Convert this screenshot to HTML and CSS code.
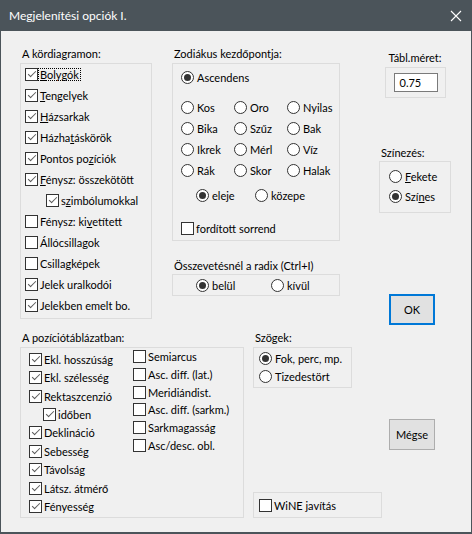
FILE: index.html
```html
<!DOCTYPE html>
<html lang="hu">
<head>
<meta charset="utf-8">
<title>Megjelenítési opciók I.</title>
<link rel="stylesheet" href="styles.css">
</head>
<body>
<div class="window">
  <div class="titlebar">
    <span class="title">Megjelenítési opciók I.</span>
    <svg class="close" width="12" height="12" viewBox="0 0 12 12"><path d="M1 1L11 11M11 1L1 11" stroke="#fff" stroke-width="1.1" fill="none"/></svg>
  </div>
  <div class="client">
    <div class="row-top">
      <div class="col c1">
        <div class="glabel">A kördiagramon:</div>
        <div class="group g-kor">
          <div class="item"><span class="cb on"></span><span class="focus"><u>B</u>olygók</span></div>
          <div class="item"><span class="cb on"></span><span><u>T</u>engelyek</span></div>
          <div class="item"><span class="cb on"></span><span><u>H</u>ázsarkak</span></div>
          <div class="item"><span class="cb on"></span><span>Házha<u>t</u>áskörök</span></div>
          <div class="item"><span class="cb on"></span><span>Pontos po<u>z</u>íciók</span></div>
          <div class="item"><span class="cb on"></span><span><u>F</u>énysz: összekötött</span></div>
          <div class="item sub"><span class="cb on"></span><span>s<u>z</u>imbólumokkal</span></div>
          <div class="item"><span class="cb"></span><span>Fénysz: ki<u>v</u>etített</span></div>
          <div class="item"><span class="cb"></span><span>Állócsillagok</span></div>
          <div class="item"><span class="cb"></span><span>Csillagképek</span></div>
          <div class="item"><span class="cb on"></span><span>Jelek uralkodói</span></div>
          <div class="item"><span class="cb on"></span><span>Jelekben emelt bo.</span></div>
        </div>
      </div>
      <div class="col c2">
        <div class="glabel">Zodiákus kezdőpontja:</div>
        <div class="group g-zod">
          <div class="item"><span class="rb on"></span><span>Ascendens</span></div>
          <div class="zgrid">
            <div class="item"><span class="rb"></span><span>Kos</span></div>
            <div class="item"><span class="rb"></span><span>Oro</span></div>
            <div class="item"><span class="rb"></span><span>Nyilas</span></div>
            <div class="item"><span class="rb"></span><span>Bika</span></div>
            <div class="item"><span class="rb"></span><span>Szűz</span></div>
            <div class="item"><span class="rb"></span><span>Bak</span></div>
            <div class="item"><span class="rb"></span><span>Ikrek</span></div>
            <div class="item"><span class="rb"></span><span>Mérl</span></div>
            <div class="item"><span class="rb"></span><span>Víz</span></div>
            <div class="item"><span class="rb"></span><span>Rák</span></div>
            <div class="item"><span class="rb"></span><span>Skor</span></div>
            <div class="item"><span class="rb"></span><span>Halak</span></div>
          </div>
          <div class="erow">
            <div class="item e1"><span class="rb on"></span><span>eleje</span></div>
            <div class="item"><span class="rb"></span><span>közepe</span></div>
          </div>
          <div class="item forditott"><span class="cb"></span><span>fordított sorrend</span></div>
        </div>
        <div class="glabel l-radix">Összevetésnél a radix (Ctrl+I)</div>
        <div class="group g-radix">
          <div class="item b1"><span class="rb on"></span><span>belül</span></div>
          <div class="item"><span class="rb"></span><span>kívül</span></div>
        </div>
      </div>
      <div class="col c3">
        <div class="glabel l-tabl">Tábl.méret:</div>
        <div class="group g-tabl"><div class="edit">0.75</div></div>
        <div class="glabel l-szin">Színezés:</div>
        <div class="group g-szin">
          <div class="item"><span class="rb"></span><span><u>F</u>ekete</span></div>
          <div class="item"><span class="rb on"></span><span>Szí<u>n</u>es</span></div>
        </div>
        <div class="btn ok">OK</div>
      </div>
    </div>
    <div class="row-bottom">
      <div class="col b1c">
        <div class="glabel">A pozíciótáblázatban:</div>
        <div class="group g-poz">
          <div class="pcol pl">
            <div class="item"><span class="cb on"></span><span>Ekl. hosszúság</span></div>
            <div class="item"><span class="cb on"></span><span>Ekl. szélesség</span></div>
            <div class="item"><span class="cb on"></span><span>Rektaszcenzió</span></div>
            <div class="item sub2"><span class="cb on"></span><span>időben</span></div>
            <div class="item"><span class="cb on"></span><span>Deklináció</span></div>
            <div class="item"><span class="cb on"></span><span>Sebesség</span></div>
            <div class="item"><span class="cb on"></span><span>Távolság</span></div>
            <div class="item"><span class="cb on"></span><span>Látsz. átmérő</span></div>
            <div class="item"><span class="cb on"></span><span>Fényesség</span></div>
          </div>
          <div class="pcol pr">
            <div class="item"><span class="cb"></span><span>Semiarcus</span></div>
            <div class="item"><span class="cb"></span><span>Asc. diff. (lat.)</span></div>
            <div class="item"><span class="cb"></span><span>Meridiándist.</span></div>
            <div class="item"><span class="cb"></span><span>Asc. diff. (sarkm.)</span></div>
            <div class="item"><span class="cb"></span><span>Sarkmagasság</span></div>
            <div class="item"><span class="cb"></span><span>Asc/desc. obl.</span></div>
          </div>
        </div>
      </div>
      <div class="col b2c">
        <div class="glabel">Szögek:</div>
        <div class="group g-szog">
          <div class="item"><span class="rb on"></span><span>Fok, perc, mp.</span></div>
          <div class="item"><span class="rb"></span><span>Tizedestört</span></div>
        </div>
        <div class="group g-wine">
          <div class="item"><span class="cb"></span><span>WiNE javítás</span></div>
        </div>
      </div>
      <div class="col b3c">
        <div class="btn megse">Mégse</div>
      </div>
    </div>
  </div>
</div>
</body>
</html>
```
FILE: styles.css
```css
* { box-sizing: border-box; }
html, body { margin: 0; padding: 0; }
body {
  width: 472px;
  height: 534px;
  overflow: hidden;
  background: #4b545a;
  font-family: Lato, "Liberation Sans", sans-serif;
  font-size: 11px;
  color: #000;
}
.window {
  width: 472px;
  height: 534px;
  display: flex;
  flex-direction: column;
  padding: 0 1px 2px 1px;
}
.titlebar {
  height: 31px;
  flex: none;
  display: flex;
  align-items: center;
  justify-content: space-between;
  padding: 0 9px 0 8px;
  color: #fff;
  font-size: 12px;
}
.close { display: block; }
.client {
  flex: 1;
  background: #f0f0f0;
  padding: 16px 0 0 19px;
}
.row-top { display: flex; height: 284px; }
.row-bottom { display: flex; }
.c1 { width: 132px; margin-right: 20px; }
.c2 { width: 168px; margin-right: 39px; }
.c3 { width: 72px; }
.glabel {
  height: 14px;
  line-height: 14px;
  padding-left: 2px;
  margin-bottom: 2px;
  white-space: nowrap;
}
.group { border: 1px solid #dcdcdc; }
.item {
  display: flex;
  align-items: center;
  height: 21px;
  white-space: nowrap;
}
u { text-decoration: underline; text-underline-offset: 1px; }
.focus { outline: 1px dotted #000; outline-offset: 0; padding: 0 1px; margin-left: -1px; line-height: 11px; }

.cb {
  position: relative;
  flex: none;
  width: 13px;
  height: 13px;
  border: 1px solid #333;
  background: #fff;
  margin-right: 2px;
}
.cb.on::after {
  content: "";
  position: absolute;
  left: 2px;
  top: 2px;
  width: 7px;
  height: 3px;
  border-left: 1px solid #5a5a5a;
  border-bottom: 1px solid #5a5a5a;
  transform: rotate(-45deg);
}
.rb {
  position: relative;
  flex: none;
  width: 13px;
  height: 13px;
  border: 1px solid #333;
  border-radius: 50%;
  background: #fff;
  margin-right: 3px;
}
.rb.on::after {
  content: "";
  position: absolute;
  left: 2px;
  top: 2px;
  width: 7px;
  height: 7px;
  border-radius: 50%;
  background: #333;
}

/* kördiagramon */
.g-kor { height: 256px; padding-left: 4px; }
.g-kor .sub { padding-left: 21px; }

/* zodiákus */
.g-zod { height: 178px; padding: 3px 0 0 8px; }
.zgrid {
  margin-top: 9px;
  display: grid;
  grid-template-columns: 53px 53px auto;
  grid-auto-rows: 21px;
}
.erow { display: flex; margin-top: 4px; padding-left: 15px; }
.erow .e1 { width: 59px; }
.forditott { margin-top: 12px; }
.l-radix { margin-top: 18px; margin-bottom: 1px; }
.g-radix { height: 22px; display: flex; align-items: center; padding-left: 23px; }
.g-radix .item { height: 20px; }
.g-radix .b1 { width: 75px; }

/* right column */
.l-tabl { margin-top: 4px; text-align: center; padding-left: 0; }
.g-tabl {
  width: 61px;
  height: 31px;
  margin-left: 6px;
  display: flex;
  align-items: center;
  justify-content: center;
}
.edit {
  width: 44px;
  height: 19px;
  border: 1px solid #7a7a7a;
  background: #fff;
  padding-left: 5px;
  line-height: 17px;
}
.l-szin { margin-top: 48px; margin-bottom: 1px; }
.g-szin { height: 52px; padding: 4px 0 0 9px; }
.g-szin .item { height: 20px; }
.btn {
  display: flex;
  align-items: center;
  justify-content: center;
  background: #e1e1e1;
  border: 1px solid #adadad;
}
.ok {
  width: 46px;
  height: 31px;
  margin: 81px 0 0 10px;
  border: 2px solid #0078d7;
}

/* bottom */
.b1c { width: 224px; margin-right: 9px; }
.g-poz { height: 171px; display: flex; }
.pl { width: 112px; padding: 2px 0 0 8px; }
.pl .item { height: 18.45px; }
.pl .sub2 { padding-left: 14px; }
.pr { padding-top: 0; }
.pr .item { height: 17.7px; }
.b2c { width: 129px; margin-right: 7px; }
.g-szog { width: 99px; height: 41px; padding: 2px 0 0 5px; }
.g-szog .item { height: 17.5px; }
.g-wine { width: 129px; height: 26px; margin-top: 104px; padding-left: 5px; display: flex; align-items: center; }
.megse { width: 46px; height: 31px; margin-top: 88px; }
```
